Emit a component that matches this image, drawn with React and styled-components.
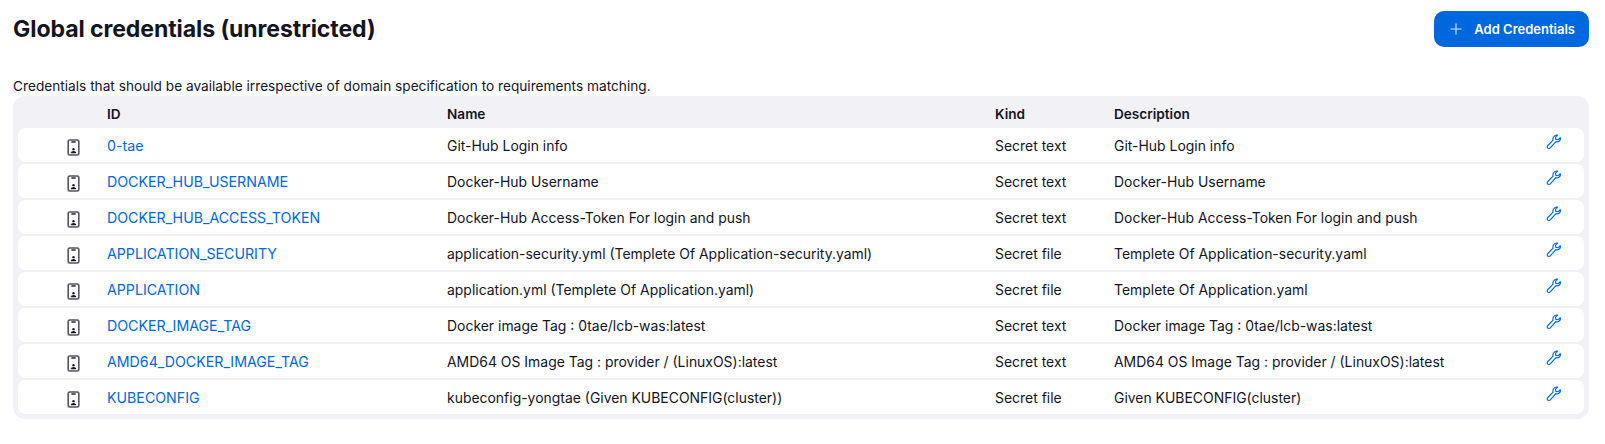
import React from "react";
import styled, { createGlobalStyle } from "styled-components";

const GlobalStyle = createGlobalStyle`
  html, body {
    margin: 0;
    background: #fff;
    font-family: Inter, "Liberation Sans", sans-serif;
    color: #14141f;
  }
`;

const rows = [
  ["0-tae", "Git-Hub Login info", "Secret text", "Git-Hub Login info"],
  ["DOCKER_HUB_USERNAME", "Docker-Hub Username", "Secret text", "Docker-Hub Username"],
  ["DOCKER_HUB_ACCESS_TOKEN", "Docker-Hub Access-Token For login and push", "Secret text", "Docker-Hub Access-Token For login and push"],
  ["APPLICATION_SECURITY", "application-security.yml (Templete Of Application-security.yaml)", "Secret file", "Templete Of Application-security.yaml"],
  ["APPLICATION", "application.yml (Templete Of Application.yaml)", "Secret file", "Templete Of Application.yaml"],
  ["DOCKER_IMAGE_TAG", "Docker image Tag : 0tae/lcb-was:latest", "Secret text", "Docker image Tag : 0tae/lcb-was:latest"],
  ["AMD64_DOCKER_IMAGE_TAG", "AMD64 OS Image Tag : provider / (LinuxOS):latest", "Secret text", "AMD64 OS Image Tag : provider / (LinuxOS):latest"],
  ["KUBECONFIG", "kubeconfig-yongtae (Given KUBECONFIG(cluster))", "Secret file", "Given KUBECONFIG(cluster)"],
];

const columns = "89px 340px 548px 119px 1fr 60px";

const Page = styled.div`
  padding: 11px 16px 0 13px;
`;

const TopBar = styled.div`
  display: flex;
  align-items: center;
  justify-content: space-between;
  height: 36px;
`;

const Title = styled.h1`
  margin: 0;
  font-size: 23.1px;
  font-weight: 700;
  letter-spacing: -0.1px;
`;

const AddButton = styled.button`
  display: flex;
  align-items: center;
  gap: 12px;
  height: 36px;
  padding: 0 14px 0 16px;
  border: none;
  border-radius: 10px;
  background: #0068de;
  color: #fff;
  font-family: inherit;
  font-size: 13px;
  font-weight: 600;
`;

const Intro = styled.p`
  margin: 29px 0 0;
  font-size: 13.68px;
  line-height: 20px;
`;

const Panel = styled.div`
  padding: 0 5px 5px;
  border-radius: 12px;
  background: #f1f1f6;
`;

const HeadRow = styled.div`
  display: grid;
  grid-template-columns: ${columns};
  align-items: center;
  height: 32px;
  padding-top: 3px;
  box-sizing: border-box;
  font-size: 13.6px;
  font-weight: 600;
`;

const Body = styled.div`
  display: flex;
  flex-direction: column;
  gap: 2px;
`;

const Row = styled.div`
  display: grid;
  grid-template-columns: ${columns};
  align-items: center;
  height: 34px;
  background: #fff;
  border-radius: 7px;
  font-size: 13.95px;
`;

const IconCell = styled.div`
  display: flex;
  justify-content: center;
  padding-left: 22px;
  padding-top: 4px;
`;

const IdLink = styled.a`
  color: #0068de;
  font-size: 14.2px;
  text-decoration: none;
`;

const ToolCell = styled.div`
  display: flex;
  justify-content: center;
  padding-bottom: 6px;
  color: #0068de;
`;

const PlusIcon = () => (
  <svg width="12" height="12" viewBox="0 0 12 12" fill="none" stroke="#dbe9fb" strokeWidth="1.1">
    <path d="M6 .5v11M.5 6h11" />
  </svg>
);

const SecretIcon = () => (
  <svg width="13" height="17" viewBox="0 0 12 16" fill="none">
    <rect x="1" y="1" width="10" height="14" rx="1.6" stroke="#55555f" strokeWidth="1.5" />
    <path d="M4 2.8h4" stroke="#14141f" strokeWidth="1.3" />
    <circle cx="6" cy="9.6" r="1.1" fill="#14141f" />
    <path d="M3.4 13.4c.2-1.5 1.2-2.2 2.6-2.2s2.4.7 2.6 2.2z" fill="#14141f" />
  </svg>
);

const WrenchIcon = () => (
  <svg width="16" height="16" viewBox="0 0 16 16" fill="none" stroke="currentColor" strokeWidth="1.15" strokeLinejoin="round">
    <path d="M11.6 1.1 9.5 3.2l.3 2.2 2.2.4 2.2-2.2c.5 1.700-.1 3.200-1.500 3.900-1 .5-2 .4-2.800.1L4.200 13.800c-.7.800-1.900.900-2.500.2-.7-.7-.5-1.800.2-2.500l5.200-5.300c-.3-.9-.3-2 .2-2.900.8-1.400 2.600-2.600 4.300-2.200z" />
  </svg>
);

export default function App() {
  return (
    <Page>
      <GlobalStyle />
      <TopBar>
        <Title>Global credentials (unrestricted)</Title>
        <AddButton>
          <PlusIcon />
          Add Credentials
        </AddButton>
      </TopBar>
      <Intro>Credentials that should be available irrespective of domain specification to requirements matching.</Intro>
      <Panel>
        <HeadRow>
          <div />
          <div>ID</div>
          <div>Name</div>
          <div>Kind</div>
          <div>Description</div>
          <div />
        </HeadRow>
        <Body>
          {rows.map((row) => (
            <Row key={row[0]}>
              <IconCell>
                <SecretIcon />
              </IconCell>
              <div>
                <IdLink href="#">{row[0]}</IdLink>
              </div>
              <div>{row[1]}</div>
              <div>{row[2]}</div>
              <div>{row[3]}</div>
              <ToolCell>
                <WrenchIcon />
              </ToolCell>
            </Row>
          ))}
        </Body>
      </Panel>
    </Page>
  );
}
